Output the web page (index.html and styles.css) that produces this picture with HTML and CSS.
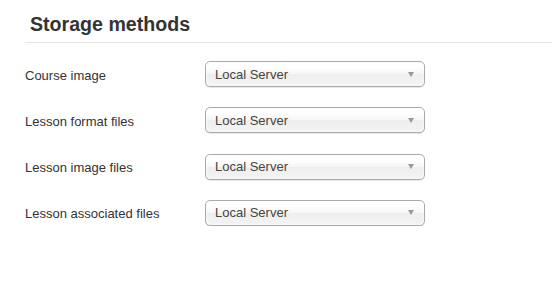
FILE: index.html
```html
<!DOCTYPE html>
<html lang="en">

<head>
    <meta charset="UTF-8">
    <title>Storage methods</title>
    <link rel="stylesheet" href="styles.css">
</head>

<body>
    <!-- Storage settings -->
    <div class="settings">
        <h2 class="section-title">Storage methods</h2>

        <div class="form-rows">
            <div class="form-row">
                <label>Course image</label>
                <div class="select-box">
                    <span>Local Server</span>
                    <b class="arrow"></b>
                </div>
            </div>
            <div class="form-row">
                <label>Lesson format files</label>
                <div class="select-box">
                    <span>Local Server</span>
                    <b class="arrow"></b>
                </div>
            </div>
            <div class="form-row">
                <label>Lesson image files</label>
                <div class="select-box">
                    <span>Local Server</span>
                    <b class="arrow"></b>
                </div>
            </div>
            <div class="form-row">
                <label>Lesson associated files</label>
                <div class="select-box">
                    <span>Local Server</span>
                    <b class="arrow"></b>
                </div>
            </div>
        </div>
    </div>
</body>

</html>
```

FILE: styles.css
```css
/* General Reset */
* {
    margin: 0;
    padding: 0;
    box-sizing: border-box;
}

body {
    font-family: 'Liberation Sans', Arial, sans-serif;
    background-color: #fff;
    color: #333;
}

/* Section */
.settings {
    padding: 13px 0 0 25px;
}

.section-title {
    font-size: 19.6px;
    line-height: 22px;
    font-weight: bold;
    color: #333;
    padding: 0 0 7px 5px;
    border-bottom: 1px solid #e5e5e5;
}

/* Rows */
.form-rows {
    display: flex;
    flex-direction: column;
    gap: 20.33px;
    padding-top: 18px;
}

.form-row {
    display: flex;
    align-items: center;
}

.form-row label {
    width: 180px;
    font-size: 13px;
    color: #333;
    padding-top: 2px;
}

/* Chosen-like select */
.select-box {
    width: 220px;
    height: 26px;
    display: flex;
    align-items: center;
    justify-content: space-between;
    padding: 0 10px 0 9px;
    font-size: 13px;
    color: #444;
    border: 1px solid #aaa;
    border-radius: 5px;
    background: linear-gradient(#fff 20%, #f6f6f6 50%, #eee 52%, #f4f4f4 100%);
    box-shadow: 0 0 3px #fff inset, 0 1px 1px rgba(0, 0, 0, 0.1);
}

.arrow {
    width: 0;
    height: 0;
    border-left: 3.5px solid transparent;
    border-right: 3.5px solid transparent;
    border-top: 5px solid #999;
}
```
